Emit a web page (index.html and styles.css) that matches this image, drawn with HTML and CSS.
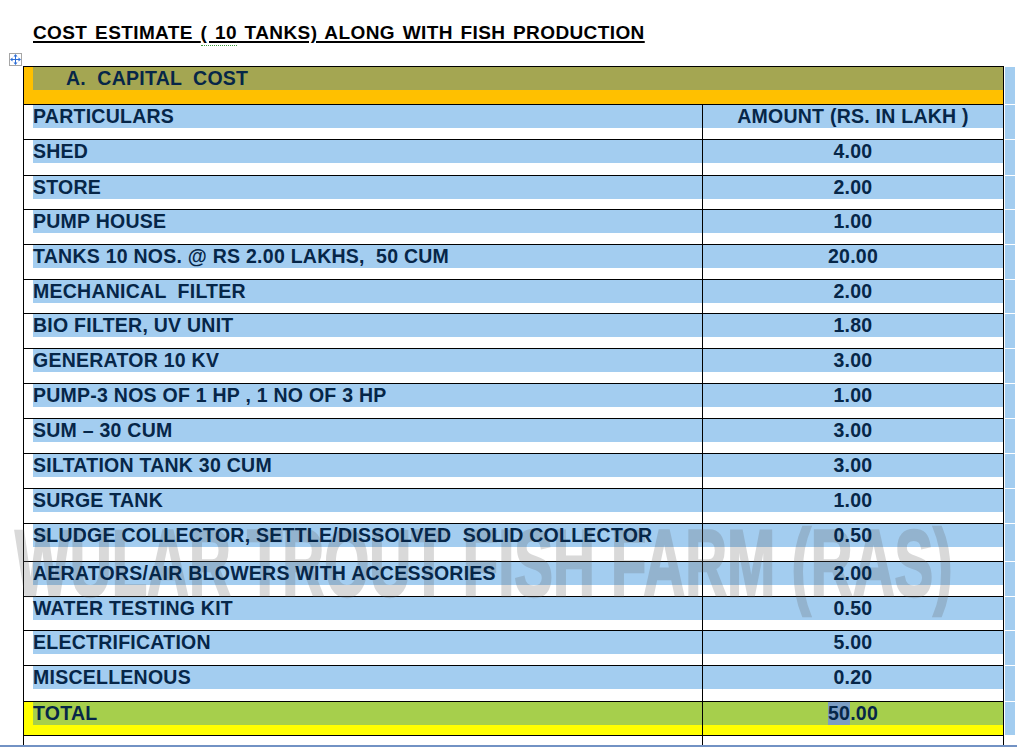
FILE: index.html
```html
<!DOCTYPE html>
<html>
<head>
<meta charset="utf-8">
<title>Cost Estimate</title>
<link rel="stylesheet" href="styles.css">
</head>
<body>
<div class="page">
  <h1 class="title">COST ESTIMATE <span class="squiggle">( 10</span> TANKS) ALONG WITH FISH PRODUCTION</h1>
  <div class="handle">
    <svg width="11" height="11" viewBox="0 0 11 11">
      <path d="M5.5 1.5 V9.5 M1.5 5.5 H9.5" stroke="#2f6fd6" stroke-width="1" fill="none"/>
      <path d="M5.5 0 L7.5 2.5 H3.5 Z M5.5 11 L7.5 8.5 H3.5 Z M0 5.5 L2.5 3.5 V7.5 Z M11 5.5 L8.5 3.5 V7.5 Z" fill="#2f6fd6"/>
    </svg>
  </div>
  <div class="table">
    <div class="row row-head">
      <div class="cells"><div class="cell cell-full orange"><div class="band olive"><span class="t head-t">A.  CAPITAL  COST</span></div></div></div>
      <div class="strip"></div>
    </div>
    <div class="row">
      <div class="cells"><div class="cell c1"><div class="band"><span class="t">PARTICULARS</span></div></div><div class="cell c2"><div class="band"><span class="t">AMOUNT (RS. IN LAKH )</span></div></div></div>
      <div class="strip"></div>
    </div>
    <div class="row r36">
      <div class="cells"><div class="cell c1"><div class="band"><span class="t">SHED</span></div></div><div class="cell c2"><div class="band"><span class="t">4.00</span></div></div></div>
      <div class="strip"></div>
    </div>
    <div class="row r34">
      <div class="cells"><div class="cell c1"><div class="band"><span class="t">STORE</span></div></div><div class="cell c2"><div class="band"><span class="t">2.00</span></div></div></div>
      <div class="strip"></div>
    </div>
    <div class="row">
      <div class="cells"><div class="cell c1"><div class="band"><span class="t">PUMP HOUSE</span></div></div><div class="cell c2"><div class="band"><span class="t">1.00</span></div></div></div>
      <div class="strip"></div>
    </div>
    <div class="row">
      <div class="cells"><div class="cell c1"><div class="band"><span class="t">TANKS 10 NOS. @ RS 2.00 LAKHS,  50 CUM</span></div></div><div class="cell c2"><div class="band"><span class="t">20.00</span></div></div></div>
      <div class="strip"></div>
    </div>
    <div class="row r34">
      <div class="cells"><div class="cell c1"><div class="band"><span class="t">MECHANICAL  FILTER</span></div></div><div class="cell c2"><div class="band"><span class="t">2.00</span></div></div></div>
      <div class="strip"></div>
    </div>
    <div class="row">
      <div class="cells"><div class="cell c1"><div class="band"><span class="t">BIO FILTER, UV UNIT</span></div></div><div class="cell c2"><div class="band"><span class="t">1.80</span></div></div></div>
      <div class="strip"></div>
    </div>
    <div class="row">
      <div class="cells"><div class="cell c1"><div class="band"><span class="t">GENERATOR 10 KV</span></div></div><div class="cell c2"><div class="band"><span class="t">3.00</span></div></div></div>
      <div class="strip"></div>
    </div>
    <div class="row">
      <div class="cells"><div class="cell c1"><div class="band"><span class="t">PUMP-3 NOS OF 1 HP , 1 NO OF 3 HP</span></div></div><div class="cell c2"><div class="band"><span class="t">1.00</span></div></div></div>
      <div class="strip"></div>
    </div>
    <div class="row">
      <div class="cells"><div class="cell c1"><div class="band"><span class="t">SUM – 30 CUM</span></div></div><div class="cell c2"><div class="band"><span class="t">3.00</span></div></div></div>
      <div class="strip"></div>
    </div>
    <div class="row">
      <div class="cells"><div class="cell c1"><div class="band"><span class="t">SILTATION TANK 30 CUM</span></div></div><div class="cell c2"><div class="band"><span class="t">3.00</span></div></div></div>
      <div class="strip"></div>
    </div>
    <div class="row">
      <div class="cells"><div class="cell c1"><div class="band"><span class="t">SURGE TANK</span></div></div><div class="cell c2"><div class="band"><span class="t">1.00</span></div></div></div>
      <div class="strip"></div>
    </div>
    <div class="row r38">
      <div class="cells"><div class="cell c1"><div class="band"><span class="t">SLUDGE COLLECTOR, SETTLE/DISSOLVED  SOLID COLLECTOR</span></div></div><div class="cell c2"><div class="band"><span class="t">0.50</span></div></div></div>
      <div class="strip"></div>
    </div>
    <div class="row">
      <div class="cells"><div class="cell c1"><div class="band"><span class="t">AERATORS/AIR BLOWERS WITH ACCESSORIES</span></div></div><div class="cell c2"><div class="band"><span class="t">2.00</span></div></div></div>
      <div class="strip"></div>
    </div>
    <div class="row r34">
      <div class="cells"><div class="cell c1"><div class="band"><span class="t">WATER TESTING KIT</span></div></div><div class="cell c2"><div class="band"><span class="t">0.50</span></div></div></div>
      <div class="strip"></div>
    </div>
    <div class="row">
      <div class="cells"><div class="cell c1"><div class="band"><span class="t">ELECTRIFICATION</span></div></div><div class="cell c2"><div class="band"><span class="t">5.00</span></div></div></div>
      <div class="strip"></div>
    </div>
    <div class="row r36">
      <div class="cells"><div class="cell c1"><div class="band"><span class="t">MISCELLENOUS</span></div></div><div class="cell c2"><div class="band"><span class="t">0.20</span></div></div></div>
      <div class="strip"></div>
    </div>
    <div class="row r34">
      <div class="cells"><div class="cell c1 yellow"><div class="band green"><span class="t">TOTAL</span></div></div><div class="cell c2 yellow"><div class="band green"><span class="t"><span class="sel">50</span>.00</span></div></div></div>
      <div class="strip"></div>
    </div>
    <div class="row row-tail">
      <div class="cells"><div class="cell c1"></div><div class="cell c2"></div></div>
    </div>
  </div>
  <div class="watermark">WULAR TROUT FISH FARM (RAS)</div>
  <div class="frame-edge"></div>
</div>
</body>
</html>
```

FILE: styles.css
```css
html, body {
  margin: 0;
  padding: 0;
  background: #ffffff;
}

body {
  font-family: "Liberation Sans", Arial, sans-serif;
}

.page {
  position: relative;
  width: 1017px;
  height: 747px;
  overflow: hidden;
}

.title {
  margin: 0;
  padding: 21px 0 0 33px;
  height: 23px;
  font-size: 19px;
  line-height: 23px;
  font-weight: bold;
  color: #000000;
  letter-spacing: 0.4px;
  word-spacing: 2px;
  text-decoration: underline;
  text-decoration-thickness: 2px;
  text-underline-offset: 2px;
  white-space: nowrap;
}

.squiggle {
  border-bottom: 1px dotted #3c9a3c;
  padding-bottom: 2px;
}

.handle {
  position: absolute;
  left: 9px;
  top: 53px;
  width: 11px;
  height: 11px;
  border: 1px solid #a6a6a6;
  background: #ffffff;
  display: flex;
}

.table {
  margin: 22px 0 0 23px;
  display: flex;
  flex-direction: column;
}

.row {
  display: flex;
  height: 35px;
}

.row.r34 { height: 34px; }
.row.r36 { height: 36px; }
.row.r38 { height: 38px; }
.row.row-head { height: 38px; }
.row.row-tail { height: 14px; }

.cells {
  width: 981px;
  box-sizing: border-box;
  display: flex;
  border-top: 1px solid #000000;
  border-left: 1px solid #000000;
  border-right: 1px solid #000000;
}

.cell {
  box-sizing: border-box;
}

.c1 {
  width: 679px;
  padding-left: 9px;
  border-right: 1px solid #000000;
}

.c2 {
  flex: 1;
  text-align: center;
}

.cell-full {
  flex: 1;
  padding-left: 9px;
}

.orange { background: #ffc000; }
.yellow { background: #ffff00; }

.band {
  height: 23px;
  line-height: 23px;
  background: #a3cdf0;
  white-space: nowrap;
}

.band.olive {
  background: #a4a652;
  padding-left: 33px;
}

.band.green {
  background: #a6cf4c;
}

.t {
  position: relative;
  z-index: 2;
  font-size: 19.5px;
  font-weight: bold;
  letter-spacing: 0.25px;
  color: #062648;
  white-space: pre;
}

.sel {
  display: inline-block;
  line-height: 23px;
  background: #7d9ec3;
}

.strip {
  width: 10px;
  margin-left: 1px;
  margin-top: 1px;
  background: #a3cdf0;
}

.watermark {
  position: absolute;
  left: 15px;
  top: 517px;
  z-index: 1;
  font-size: 58px;
  line-height: 1;
  font-weight: bold;
  color: #646464;
  -webkit-text-stroke: 1.5px #646464;
  opacity: 0.24;
  white-space: nowrap;
  transform: scaleY(1.62);
  transform-origin: top left;
  pointer-events: none;
}

.frame-edge {
  position: absolute;
  left: 0;
  right: 0;
  top: 745px;
  height: 2px;
  background: #7292c4;
  z-index: 3;
}
```
